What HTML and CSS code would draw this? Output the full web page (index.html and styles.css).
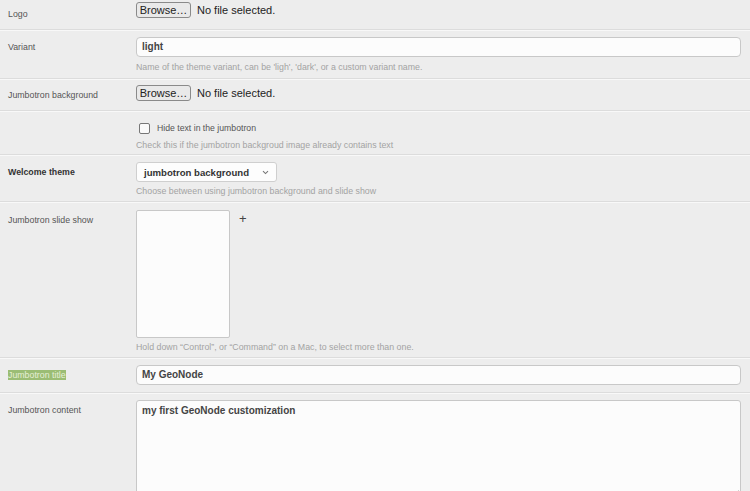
FILE: index.html
```html
<!DOCTYPE html>
<html>
<head>
<meta charset="utf-8">
<link rel="stylesheet" href="styles.css">
</head>
<body>
<div class="form">
  <div class="row row-first row-file">
    <div class="label">Logo</div>
    <div class="field">
      <div class="file"><span class="browse">Browse…</span><span class="nofile">No file selected.</span></div>
    </div>
  </div>
  <div class="row">
    <div class="label">Variant</div>
    <div class="field">
      <div class="input">light</div>
      <div class="help">Name of the theme variant, can be 'ligh', 'dark', or a custom variant name.</div>
    </div>
  </div>
  <div class="row row-file">
    <div class="label">Jumbotron background</div>
    <div class="field">
      <div class="file"><span class="browse">Browse…</span><span class="nofile">No file selected.</span></div>
    </div>
  </div>
  <div class="row row-check">
    <div class="label"></div>
    <div class="field">
      <label class="check"><span class="box"></span>Hide text in the jumbotron</label>
      <div class="help">Check this if the jumbotron backgroud image already contains text</div>
    </div>
  </div>
  <div class="row row-select">
    <div class="label bold">Welcome theme</div>
    <div class="field">
      <div class="select">jumbotron background<svg class="chev" width="7" height="5" viewBox="0 0 7 5"><path d="M1 1.2 L3.5 3.6 L6 1.2" fill="none" stroke="#777" stroke-width="1.1"/></svg></div>
      <div class="help">Choose between using jumbotron background and slide show</div>
    </div>
  </div>
  <div class="row row-multi">
    <div class="label">Jumbotron slide show</div>
    <div class="field">
      <div class="multi-wrap"><div class="multi"></div><span class="plus">+</span></div>
      <div class="help">Hold down “Control”, or “Command” on a Mac, to select more than one.</div>
    </div>
  </div>
  <div class="row row-title">
    <div class="label"><span class="hl">Jumbotron title</span></div>
    <div class="field">
      <div class="input">My GeoNode</div>
    </div>
  </div>
  <div class="row row-last">
    <div class="label">Jumbotron content</div>
    <div class="field">
      <div class="textarea">my first GeoNode customization<svg class="grip" width="9" height="9" viewBox="0 0 9 9"><path d="M8.5 1.5 L1.5 8.5 M8.5 4 L4 8.5 M8.5 6.5 L6.5 8.5" stroke="#999" stroke-width="0.9"/></svg></div>
    </div>
  </div>
</div>
</body>
</html>
```
FILE: styles.css
```css
html, body {
  margin: 0;
  padding: 0;
  background: #ededed;
  overflow: hidden;
}
body {
  font-family: "Liberation Sans", Arial, sans-serif;
  font-size: 9px;
  color: #555;
}
.form {
  width: 750px;
}
.row {
  display: grid;
  grid-template-columns: 128px 1fr;
  padding: 6px 9px 5px 8px;
  border-top: 1px solid #f8f8f8;
  border-bottom: 1px solid #dcdcdc;
}
.row-first {
  border-top: 0;
}
.row-file {
  padding-top: 5px;
  padding-bottom: 9px;
}
.row-first.row-file {
  padding-top: 2px;
  padding-bottom: 9px;
}
.row-check {
  padding-top: 9px;
  padding-bottom: 3px;
}
.row-select {
  padding-bottom: 4px;
}
.row-multi {
  padding-top: 7px;
  padding-bottom: 4px;
}
.row-title {
  padding-bottom: 7px;
}
.row-last {
  border-bottom: 0;
  padding-bottom: 0;
}
.label {
  padding-top: 5px;
  line-height: 11px;
  font-size: 8.8px;
  color: #555;
}
.label.bold {
  font-weight: bold;
  color: #333;
}
.row-file .label {
  padding-top: 5px;
}
.row-first.row-file .label {
  padding-top: 7px;
}
.hl {
  background: #9bbd74;
  color: #e6efd6;
  padding: 0;
}
.field {
  min-width: 0;
}
.file {
  display: flex;
  align-items: center;
  height: 16px;
  gap: 6px;
}
.browse {
  box-sizing: border-box;
  height: 16px;
  width: 55px;
  border: 1px solid #8a8a8a;
  border-radius: 3px;
  background: #e9e9e9;
  color: #222;
  font-size: 11px;
  line-height: 14px;
  text-align: center;
}
.nofile {
  font-size: 11px;
  color: #222;
}
.input {
  box-sizing: border-box;
  height: 20px;
  border: 1px solid #c8c8c8;
  border-radius: 4px;
  background: #fcfcfc;
  padding: 0 5px;
  font-size: 10px;
  font-weight: bold;
  line-height: 18px;
  color: #444;
}
.help {
  margin-top: 5px;
  line-height: 11px;
  font-size: 8.8px;
  color: #a3a3a3;
}
.row-select .help,
.row-multi .help {
  margin-top: 4px;
}
.check {
  display: flex;
  align-items: center;
  height: 14px;
  padding-left: 3px;
  gap: 7px;
  color: #555;
  font-size: 8.7px;
}
.box {
  box-sizing: border-box;
  width: 11px;
  height: 11px;
  border: 1px solid #777;
  border-radius: 2px;
  background: #fafafa;
}
.select {
  box-sizing: border-box;
  width: 141px;
  height: 20px;
  border: 1px solid #cfcfcf;
  border-radius: 3px;
  background: #fdfdfd;
  padding: 0 7px;
  display: flex;
  align-items: center;
  justify-content: space-between;
  font-size: 9.6px;
  font-weight: bold;
  color: #333;
}
.chev {
  display: block;
}
.multi-wrap {
  display: flex;
  align-items: flex-start;
  gap: 9px;
}
.multi {
  box-sizing: border-box;
  width: 94px;
  height: 128px;
  border: 1px solid #c8c8c8;
  border-radius: 2px;
  background: #fcfcfc;
}
.plus {
  font-size: 13px;
  line-height: 14px;
  color: #444;
  margin-top: 2px;
}
.textarea {
  position: relative;
  box-sizing: border-box;
  height: 100px;
  border: 1px solid #c8c8c8;
  border-radius: 3px;
  background: #fcfcfc;
  padding: 4px 5px;
  font-size: 10px;
  font-weight: bold;
  line-height: 12px;
  color: #444;
}
.grip {
  position: absolute;
  right: 1px;
  bottom: 1px;
}
```
